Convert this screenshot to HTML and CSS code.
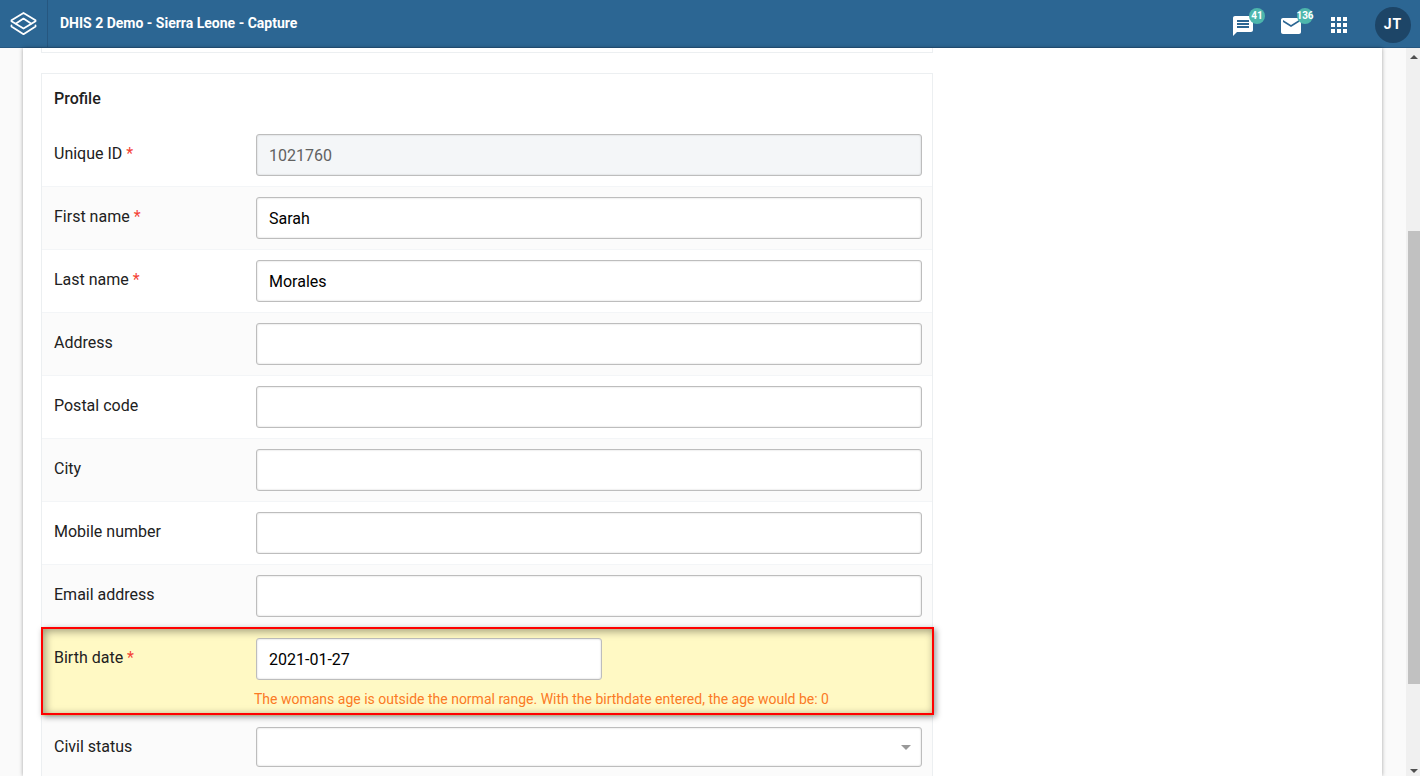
FILE: index.html
```html
<!DOCTYPE html>
<html lang="en">
<head>
<meta charset="utf-8">
<title>DHIS 2 Demo - Sierra Leone - Capture</title>
<link rel="stylesheet" href="styles.css">
</head>
<body>
<header class="topbar">
  <a class="logo" href="#" aria-label="Home">
    <svg width="28" height="26" viewBox="0 0 28 26" fill="none" stroke="#fff" stroke-width="1.8" stroke-linejoin="round" stroke-linecap="round">
      <path d="M13.500 2 25.500 9.200v1L13.500 17.600 1.500 10.200v-1z"/>
      <path d="M6 12.600 13.500 7.600 21 12.600"/>
      <path d="M1.500 14.400v1.200L13.500 23.200l12-7.600v-1.200"/>
    </svg>
  </a>
  <h1 class="title">DHIS 2 Demo - Sierra Leone - Capture</h1>
  <nav class="tools">
    <a class="tool notice" href="#" aria-label="Interpretations">
      <svg width="24" height="24" viewBox="0 0 24 24" fill="#fff"><path d="M20 2H4c-1.100 0-1.990.9-1.990 2L2 22l4-4h14c1.100 0 2-.9 2-2V4c0-1.100-.9-2-2-2zM6 9h12v2H6V9zm12 5H6v-2h12v2zm0-6H6V6h12v2z"/></svg>
      <span class="badge">41</span>
    </a>
    <a class="tool notice" href="#" aria-label="Messages">
      <svg width="24" height="24" viewBox="0 0 24 24" fill="#fff"><path d="M20 4H4c-1.100 0-1.990.9-1.990 2L2 18c0 1.100.9 2 2 2h16c1.100 0 2-.9 2-2V6c0-1.100-.9-2-2-2zm0 4l-8 5-8-5V6l8 5 8-5v2z"/></svg>
      <span class="badge">136</span>
    </a>
    <button class="tool" type="button" aria-label="Apps">
      <svg width="24" height="24" viewBox="0 0 24 24" fill="#fff"><path d="M4 8h4V4H4v4zm6 12h4v-4h-4v4zm-6 0h4v-4H4v4zm0-6h4v-4H4v4zm6 0h4v-4h-4v4zm6-10v4h4V4h-4zm-6 4h4V4h-4v4zm6 6h4v-4h-4v4zm0 6h4v-4h-4v4z"/></svg>
    </button>
    <button class="avatar" type="button">JT</button>
  </nav>
</header>
<div class="viewport">
  <main class="paper">
    <div class="section previous"></div>
    <form class="section">
      <h2 class="heading">Profile</h2>
      <div class="row">
        <label class="label" for="uid">Unique ID <span class="required">*</span></label>
        <input class="field" id="uid" type="text" value="1021760" disabled>
      </div>
      <div class="row">
        <label class="label" for="first">First name <span class="required">*</span></label>
        <input class="field" id="first" type="text" value="Sarah">
      </div>
      <div class="row">
        <label class="label" for="last">Last name <span class="required">*</span></label>
        <input class="field" id="last" type="text" value="Morales">
      </div>
      <div class="row">
        <label class="label" for="address">Address</label>
        <input class="field" id="address" type="text">
      </div>
      <div class="row">
        <label class="label" for="postal">Postal code</label>
        <input class="field" id="postal" type="text">
      </div>
      <div class="row">
        <label class="label" for="city">City</label>
        <input class="field" id="city" type="text">
      </div>
      <div class="row">
        <label class="label" for="mobile">Mobile number</label>
        <input class="field" id="mobile" type="text">
      </div>
      <div class="row">
        <label class="label" for="email">Email address</label>
        <input class="field" id="email" type="text">
      </div>
      <div class="row warning">
        <label class="label" for="birth">Birth date <span class="required">*</span></label>
        <div class="control">
          <input class="field date" id="birth" type="text" value="2021-01-27">
          <p class="message">The womans age is outside the normal range. With the birthdate entered, the age would be: 0</p>
        </div>
      </div>
      <div class="row shaded">
        <label class="label" for="civil">Civil status</label>
        <div class="select-wrap">
          <select class="field select" id="civil"><option></option></select>
          <svg class="caret" width="10" height="5" viewBox="0 0 10 5" fill="#999"><path d="M0 0h10L5 5z"/></svg>
        </div>
      </div>
    </form>
  </main>
  <div class="scrollbar">
    <svg width="8" height="4" viewBox="0 0 8 4" fill="#505050"><path d="M4 0 8 4H0z"/></svg>
    <div class="track"><div class="thumb"></div></div>
    <svg width="8" height="4" viewBox="0 0 8 4" fill="#505050"><path d="M0 0h8L4 4z"/></svg>
  </div>
</div>
</body>
</html>
```
FILE: styles.css
```css
* {
  box-sizing: border-box;
}

body {
  margin: 0;
  height: 100vh;
  display: flex;
  flex-direction: column;
  overflow: hidden;
  background: #fafafa;
  color: #212121;
  font-family: Roboto, sans-serif;
  font-size: 16px;
}

.topbar {
  flex: none;
  display: flex;
  align-items: center;
  height: 48px;
  background: #2c6693;
  border-bottom: 1px solid #265780;
}

.logo {
  display: flex;
  align-items: center;
  justify-content: center;
  width: 48px;
  height: 100%;
  border-right: 1px solid #265780;
}

.title {
  flex: 1;
  margin: 0;
  padding: 0 0 2px 12px;
  color: #fff;
  font-size: 14px;
  line-height: 20px;
  font-weight: 700;
}

.tools {
  display: flex;
  align-items: center;
  gap: 24px;
  padding: 3px 9px 0 0;
}

.tool {
  position: relative;
  display: flex;
  padding: 0;
  border: 0;
  background: none;
}

.notice {
  padding-top: 2px;
}

.badge {
  position: absolute;
  top: -4px;
  right: -10px;
  width: 16px;
  height: 16px;
  display: flex;
  align-items: center;
  justify-content: center;
  border-radius: 8px;
  background: #4db6ac;
  color: #fff;
  font-size: 10px;
  line-height: 16px;
  font-weight: 700;
}

.avatar {
  width: 36px;
  height: 36px;
  padding: 0 0 2px;
  border: 0;
  border-radius: 50%;
  background: #1d4567;
  color: #fff;
  font: 700 14px Roboto, sans-serif;
  letter-spacing: 1px;
}

.viewport {
  flex: 1;
  min-height: 0;
  display: flex;
}

.paper {
  flex: 1;
  overflow: hidden;
  margin: 0 24px 0 23px;
  padding: 0 18px;
  background: #fff;
  box-shadow: 0 0 4px rgba(0, 0, 0, 0.35);
}

.section {
  max-width: 892px;
  border: 1px solid #eceff1;
}

.previous {
  height: 5px;
  margin-bottom: 20px;
  border-top: 0;
}

.heading {
  margin: 0;
  padding: 13px 12px;
  font-size: 16px;
  line-height: 24px;
  font-weight: 500;
}

.row {
  display: grid;
  grid-template-columns: 202px minmax(0, 1fr);
  padding: 10px 10px 10px 12px;
  border-bottom: 1px solid #f3f5f7;
}

.row:nth-child(odd),
.shaded {
  background: #fbfbfb;
}

.label {
  padding-top: 8px;
  line-height: 24px;
  font-weight: 400;
}

.required {
  color: #f44336;
}

.field {
  width: 100%;
  height: 42px;
  padding: 0 12px;
  border: 1px solid #bdbdbd;
  border-radius: 3px;
  background: #fff;
  box-shadow: inset 0 0 2px rgba(0, 0, 0, 0.2);
  color: #000;
  font: 16px Roboto, sans-serif;
}

.field:disabled {
  background: #f4f6f8;
  color: #616161;
}

.warning,
.row.warning {
  position: relative;
  padding-bottom: 7px;
  background: #fff9c4;
}

.warning::after {
  content: "";
  position: absolute;
  inset: -1px -2px 1px -1px;
  border: 2px solid #f00;
  box-shadow: 2px 2px 6px rgba(0, 0, 0, 0.4), inset 2px 2px 8px rgba(0, 0, 0, 0.4);
  pointer-events: none;
}

.date {
  max-width: 346px;
}

.message {
  margin: 9px 0 0 -2px;
  color: #fb7a25;
  font-size: 14px;
  line-height: 20px;
}

.select-wrap {
  position: relative;
}

.select {
  display: block;
  height: 40px;
  appearance: none;
}

.caret {
  position: absolute;
  right: 11px;
  top: 18px;
  pointer-events: none;
}

.scrollbar {
  flex: none;
  display: flex;
  flex-direction: column;
  align-items: center;
  width: 14px;
  padding: 7px 0 3px 2px;
  background: #f0f0f0;
}

.track {
  flex: 1;
  align-self: stretch;
  display: flex;
  flex-direction: column;
  padding: 172px 0 85px;
}

.thumb {
  flex: 1;
  background: #c1c1c1;
}
```
